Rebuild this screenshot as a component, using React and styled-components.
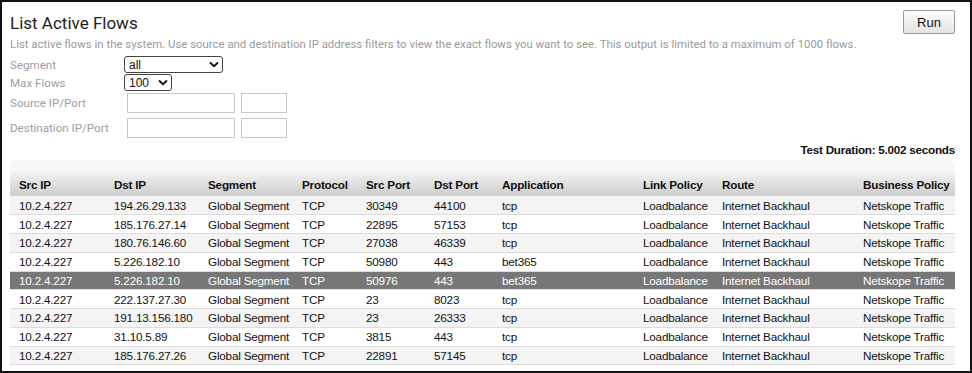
import styled, { createGlobalStyle } from "styled-components";

const GlobalStyle = createGlobalStyle`
  html, body {
    margin: 0;
    padding: 0;
    background: #fff;
  }
  * {
    box-sizing: border-box;
  }
`;

const Frame = styled.div`
  width: 972px;
  height: 373px;
  border: 2px solid #111;
  padding: 8px 15px 0 8px;
  font-family: Roboto, "Liberation Sans", sans-serif;
  overflow: hidden;
`;

const TopBar = styled.div`
  display: flex;
  justify-content: space-between;
  align-items: flex-start;
`;

const Title = styled.h1`
  margin: 0;
  font-size: 17px;
  font-weight: 400;
  color: #222;
  line-height: 24px;
  padding-top: 1px;
`;

const RunButton = styled.button`
  width: 52px;
  height: 24px;
  border: 1px solid #999;
  border-radius: 2px;
  background: linear-gradient(#fdfdfd, #e4e4e4);
  font-family: "Liberation Sans", Arial, sans-serif;
  font-size: 13px;
  color: #111;
  padding: 0;
`;

const Description = styled.p`
  margin: 1px 0 0;
  font-size: 11.4px;
  color: #9a9a9a;
  line-height: 16px;
`;

const FormGrid = styled.div`
  display: grid;
  grid-template-columns: 114px auto;
  align-items: center;
  margin-top: 4px;
  row-gap: 1px;
`;

const Label = styled.div`
  font-size: 11.6px;
  color: #a0a0a0;
  line-height: 16px;
  padding-top: ${(p) => p.$pt || 0}px;
`;

const Controls = styled.div`
  display: flex;
  gap: 6px;
  padding-left: ${(p) => p.$indent || 0}px;
  padding-top: ${(p) => p.$pt || 0}px;
`;

const SelectBox = styled.div`
  flex: none;
  display: flex;
  align-items: center;
  justify-content: space-between;
  gap: 2px;
  width: ${(p) => p.$w}px;
  height: 17px;
  border: 1px solid #444;
  border-radius: 3px;
  padding: 0 3px 0 4px;
  font-family: "Liberation Sans", Arial, sans-serif;
  font-size: 12px;
  color: #111;
  background: #fff;

  svg {
    flex: none;
  }
`;

const TextInput = styled.input`
  width: ${(p) => p.$w}px;
  height: 20px;
  border: 1px solid #c8c8c8;
  background: #fff;
  padding: 0 3px;
`;

const Duration = styled.div`
  text-align: right;
  font-family: "Liberation Sans", Arial, sans-serif;
  font-size: 11.7px;
  font-weight: 700;
  letter-spacing: -0.25px;
  color: #111;
  margin-top: 5px;
  line-height: 14px;
`;

const TableWrap = styled.div`
  margin-top: 3px;
  padding-top: 12px;
  background: #f7f7f7;
  border-radius: 6px 6px 0 0;
`;

const Table = styled.table`
  width: 100%;
  border-collapse: collapse;
  font-family: "Liberation Sans", Arial, sans-serif;
  font-size: 11.7px;
  letter-spacing: -0.2px;
  color: #111;
  table-layout: fixed;
`;

const Th = styled.th`
  text-align: left;
  font-weight: 700;
  height: 24px;
  padding: 0 0 0 9px;
  background: linear-gradient(#f2f2f2, #cdcdcd);
  color: #111;
  white-space: nowrap;
  overflow: hidden;
`;

const Tr = styled.tr`
  background: ${(p) => (p.$active ? "#777" : p.$odd ? "#f4f4f4" : "#fff")};
  color: ${(p) => (p.$active ? "#fff" : "#111")};
  border-bottom: 1px solid #dcdcdc;
`;

const Td = styled.td`
  height: 18.75px;
  padding: 0 0 0 9px;
  white-space: nowrap;
  overflow: hidden;
`;

const Chevron = () => (
  <svg width="10" height="7" viewBox="0 0 10 7">
    <path d="M1 1.5 L5 5.2 L9 1.5" fill="none" stroke="#111" strokeWidth="1.8" />
  </svg>
);

const Select = ({ value, width }) => (
  <SelectBox $w={width}>
    <span>{value}</span>
    <Chevron />
  </SelectBox>
);

const columns = [
  ["Src IP", 95],
  ["Dst IP", 94],
  ["Segment", 94],
  ["Protocol", 64],
  ["Src Port", 68],
  ["Dst Port", 68],
  ["Application", 141],
  ["Link Policy", 79],
  ["Route", 141],
  ["Business Policy", 101],
];

const flows = [
  ["194.26.29.133", "30349", "44100", "tcp"],
  ["185.176.27.14", "22895", "57153", "tcp"],
  ["180.76.146.60", "27038", "46339", "tcp"],
  ["5.226.182.10", "50980", "443", "bet365"],
  ["5.226.182.10", "50976", "443", "bet365"],
  ["222.137.27.30", "23", "8023", "tcp"],
  ["191.13.156.180", "23", "26333", "tcp"],
  ["31.10.5.89", "3815", "443", "tcp"],
  ["185.176.27.26", "22891", "57145", "tcp"],
];

export default function App() {
  return (
    <>
      <GlobalStyle />
      <Frame>
        <TopBar>
          <Title>List Active Flows</Title>
          <RunButton>Run</RunButton>
        </TopBar>
        <Description>
          List active flows in the system. Use source and destination IP address filters to view the exact flows you
          want to see. This output is limited to a maximum of 1000 flows.
        </Description>
        <FormGrid>
          <Label>Segment</Label>
          <Controls>
            <Select value="all" width={99} />
          </Controls>
          <Label>Max Flows</Label>
          <Controls>
            <Select value="100" width={48} />
          </Controls>
          <Label $pt={1}>Source IP/Port</Label>
          <Controls $indent={3} $pt={1}>
            <TextInput $w={108} />
            <TextInput $w={46} />
          </Controls>
          <Label $pt={4}>Destination IP/Port</Label>
          <Controls $indent={3} $pt={4}>
            <TextInput $w={108} />
            <TextInput $w={46} />
          </Controls>
        </FormGrid>
        <Duration>Test Duration: 5.002 seconds</Duration>
        <TableWrap>
          <Table>
            <colgroup>
              {columns.map(([name, w]) => (
                <col key={name} style={{ width: w }} />
              ))}
            </colgroup>
            <thead>
              <tr>
                {columns.map(([name]) => (
                  <Th key={name}>{name}</Th>
                ))}
              </tr>
            </thead>
            <tbody>
              {flows.map(([dst, sport, dport, app], i) => (
                <Tr key={i} $odd={i % 2 === 0} $active={i === 4}>
                  <Td>10.2.4.227</Td>
                  <Td>{dst}</Td>
                  <Td>Global Segment</Td>
                  <Td>TCP</Td>
                  <Td>{sport}</Td>
                  <Td>{dport}</Td>
                  <Td>{app}</Td>
                  <Td>Loadbalance</Td>
                  <Td>Internet Backhaul</Td>
                  <Td>Netskope Traffic</Td>
                </Tr>
              ))}
            </tbody>
          </Table>
        </TableWrap>
      </Frame>
    </>
  );
}
